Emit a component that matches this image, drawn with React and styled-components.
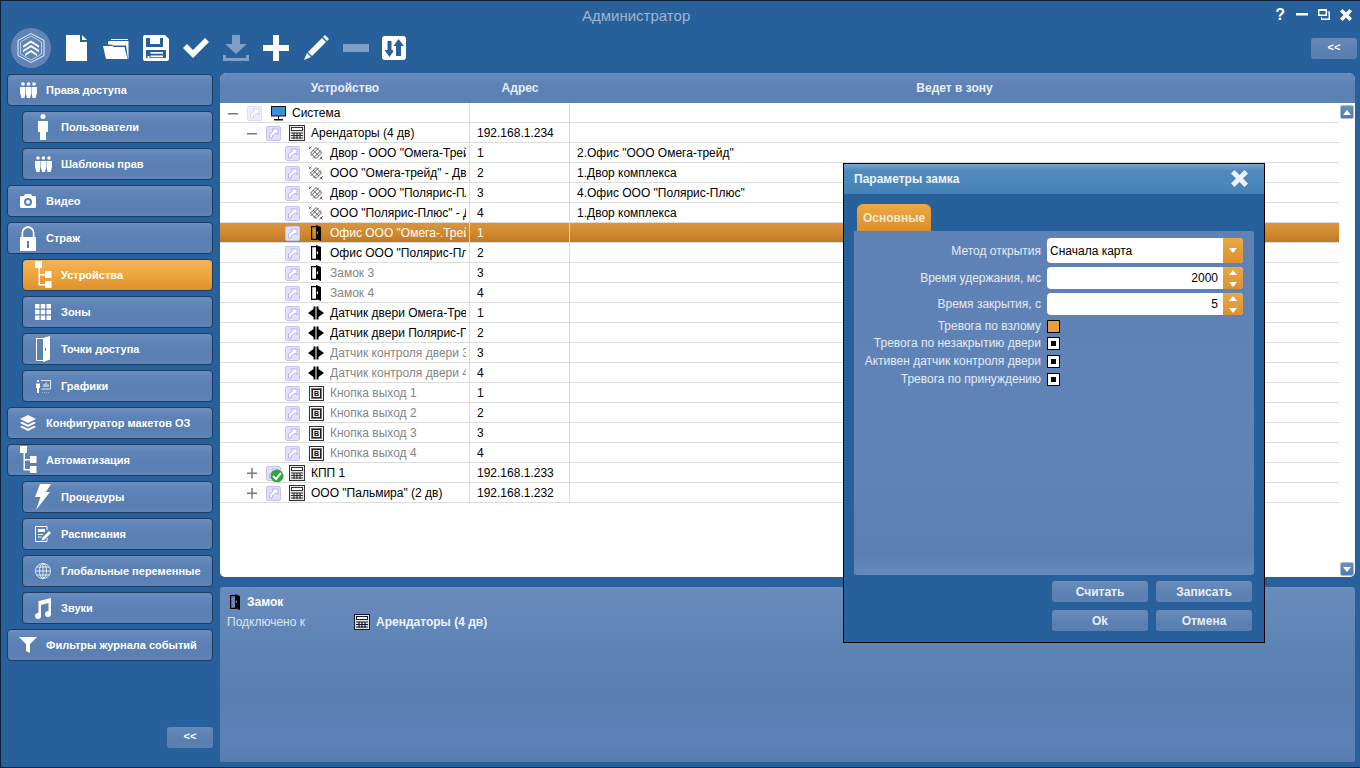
import React from "react";
import styled, { createGlobalStyle } from "styled-components";

const Global = createGlobalStyle`
  html, body { margin: 0; padding: 0; background: #27609a; }
  body { font-family: "Liberation Sans", Arial, sans-serif; }
  * { box-sizing: border-box; }
`;

const blueGrad = "linear-gradient(180deg,#6d8fc0 0%,#5f84b7 22%,#5a7fb2 55%,#5b80b4 85%,#6285b9 100%)";

const Win = styled.div`
  position: relative;
  width: 1360px; height: 768px; overflow: hidden;
  background: #27609a;
  border-top: 1px solid #0d2238; border-left: 1px solid #0d2238; border-bottom: 1px solid #0d2238;
  display: flex; flex-direction: column;
`;
const TitleBar = styled.div`
  height: 27px; flex: none; display: grid; grid-template-columns: 581px auto 1fr; align-items: center;
`;
const Title = styled.div`
  font-size: 15px; color: #9fb6d0; padding-top: 1px;
`;
const WinBtns = styled.div`
  justify-self: end; display: flex; align-items: center; gap: 10px; padding-right: 8px; color: #fff;
`;
const Help = styled.span`
  font: bold 16px "Liberation Sans", sans-serif; color: #fff; margin-right: 1px;
`;
const ToolBar = styled.div`
  height: 40px; margin-bottom: 5px; flex: none; display: flex; align-items: center; padding: 0 3px 0 10px;
`;
const Logo = styled.div`
  width: 40px; height: 40px; border-radius: 50%; background: #5f84b5; display: flex; align-items: center; justify-content: center; margin-right: 12px;
`;
const Tool = styled.div`
  width: 26px; height: 26px; margin: 0 14px 0 ${p => p.$shift || 0}px; display: flex; align-items: center; justify-content: center; color: ${p => (p.$muted ? "#7ea0c8" : "#fff")};
`;
const CollapseBtn = styled.button`
  width: 46px; height: 21px; border: 0; border-radius: 3px; padding: 0 0 3px; background: linear-gradient(180deg,#6888b9,#5a80b2 60%,#5a7fb1);
  color: #fff; font: bold 11px "Liberation Sans", sans-serif;
`;
const ToolSpacer = styled.div`flex: 1;`;
const Body = styled.div`
  flex: 1; min-height: 0; display: flex; padding: 0 5px 5px 0;
`;
const Side = styled.nav`
  width: 219px; flex: none; display: flex; flex-direction: column; gap: 5px; padding: 1px 7px 14px 6px;
`;
const NavItem = styled.div`
  height: 32px; flex: none; margin-left: ${p => (p.$sub ? "15px" : "0")};
  display: flex; align-items: center; padding-left: 5px;
  border: 1px solid #1c3d63; border-radius: 4px;
  background: ${p => (p.$active ? "linear-gradient(180deg,#f3b355 0%,#eda63f 50%,#e0902d 100%)" : blueGrad)};
  color: #fff; font-size: 11px; font-weight: bold;
`;
const NavIcon = styled.span`
  width: 30px; height: 30px; flex: none; display: flex; align-items: center; justify-content: center; margin-right: 3px; color: #fff;
`;
const SideFoot = styled.div`
  margin-top: auto; display: flex; justify-content: flex-end;
`;
const Right = styled.div`
  flex: 1; min-width: 0; display: flex; flex-direction: column; gap: 10px;
`;
const TreePanel = styled.section`
  height: 504px; flex: none; display: flex; flex-direction: column; background: #fff; border-radius: 7px 7px 5px 5px; overflow: hidden; position: relative;
`;
const Head = styled.div`
  height: 30px; flex: none; display: grid; grid-template-columns: 250px 100px 1fr 16px; align-items: center;
  background: linear-gradient(180deg,#6888ba,#5b80b3 60%,#5c81b5);
  color: #e8eef6; font-size: 12px; font-weight: bold; text-align: center;
`;
const HeadCell = styled.div`padding-bottom: 1px;`;
const Rows = styled.div`
  flex: 1; margin-right: 16px;
`;
const Row = styled.div`
  height: 20px; display: grid; grid-template-columns: 250px 100px 1fr; align-items: stretch;
  border-bottom: 1px solid #dcdcdc; font-size: 12px; line-height: 18px;
  background: ${p => (p.$sel ? "linear-gradient(180deg,#d9963f 0%,#d28a30 50%,#bd7a25 100%)" : "#fff")};
  color: ${p => (p.$sel ? "#fff" : "#000")};
`;
const NameCell = styled.div`
  display: flex; align-items: center; overflow: hidden; padding: 1px 0 0 ${p => p.$lvl * 19 + 8}px; border-right: 1px solid #dcdcdc;
  color: ${p => (p.$grey ? "#858585" : "inherit")};
`;
const Cell = styled.div`
  padding: 1px 0 0 7px; overflow: hidden; white-space: nowrap; border-right: ${p => (p.$last ? "0" : "1px solid #dcdcdc")};
`;
const Toggle = styled.span`
  width: 11px; height: 18px; flex: none; display: flex; align-items: center; justify-content: center; margin-right: 8px;
`;
const DevIcon = styled.span`
  width: 16px; height: 16px; flex: none; margin: 0 6px 0 8px; display: flex; align-items: center; justify-content: center;
`;
const Short = styled.span`
  position: relative; width: 15px; height: 15px; flex: none; display: block; opacity: ${p => p.$o || 1};
`;
const Badge = styled.span`
  position: absolute; left: 4px; top: 3px; width: 14px; height: 14px;
`;
const Name = styled.span`
  white-space: nowrap; overflow: hidden; flex: 1; margin-right: 3px;
`;
const Scroll = styled.button`
  position: absolute; right: 1px; width: 14px; height: 14px; padding: 0; border: 1px solid #a8bcd6; border-radius: 2px;
  background: linear-gradient(180deg,#6c8fc0,#4f78b0); display: flex; align-items: center; justify-content: center;
  top: ${p => (p.$down ? "489px" : "32px")};
`;
const Detail = styled.section`
  height: 175px; flex: none; border-radius: 3px 3px 0 0;
  background: linear-gradient(180deg,#698cbc 0%,#5f84b6 30%,#5a7eb0 60%,#5c81b7 90%,#587cb0 100%);
  padding: 7px 7px; color: #fff; font-size: 12px;
`;
const DetailTitle = styled.div`
  display: flex; align-items: center; gap: 6px; font-weight: bold; height: 16px; padding-left: 2px;
`;
const DetailRow = styled.div`
  display: flex; align-items: center; margin-top: 2px; height: 20px;
`;
const DetailLabel = styled.span`width: 127px; color: #dde7f3;`;
const DetailVal = styled.span`font-weight: bold; margin-left: 6px; color: #eef3f9;`;

const Dialog = styled.div`
  position: absolute; left: 842px; top: 162px; width: 422px; height: 480px; background: #27609a; border: 1px solid #000; display: flex; flex-direction: column;
`;
const DlgHead = styled.div`
  height: 30px; flex: none; display: flex; align-items: center; justify-content: space-between; padding: 0 16px 1px 10px;
  background: linear-gradient(180deg,#7ea6cb 0%,#4f8bbd 22%,#4582b6 100%);
  color: #eef3f8; font-size: 12px; font-weight: bold;
`;
const Tabs = styled.div`
  padding: 10px 0 0 13px; height: 37px; flex: none; display: flex;
`;
const Tab = styled.div`
  width: 74px; height: 27px; border-radius: 6px 6px 0 0; background: linear-gradient(180deg,#eda943,#db8e2c);
  color: #f5e8d2; font-size: 12px; font-weight: bold; display: flex; align-items: center; justify-content: center;
`;
const Pane = styled.div`
  margin: 0 10px; height: 344px; flex: none; border-radius: 0 3px 3px 3px; background: linear-gradient(180deg,#5f82b6 0%,#6084b8 70%,#5c7fb3 94%,#6589bb 100%);
  padding-top: 7px; display: flex; flex-direction: column;
`;
const FRow = styled.div`
  display: grid; grid-template-columns: 187px 196px; column-gap: 6px; align-items: center; height: ${p => p.$h}px; margin-bottom: ${p => p.$mb ?? 4}px;
`;
const FLabel = styled.label`
  text-align: right; color: #e3ebf4; font-size: 12px; white-space: nowrap;
`;
const Field = styled.div`
  height: 100%; display: flex; background: #fff; border-radius: 4px; overflow: hidden; color: #000; font-size: 12px;
`;
const FieldText = styled.div`
  flex: 1; display: flex; align-items: center; padding: 0 ${p => (p.$right ? "5px" : "3px")}; justify-content: ${p => (p.$right ? "flex-end" : "flex-start")};
`;
const SelBtn = styled.div`
  width: 20px; flex: none; background: linear-gradient(180deg,#eba843,#dd9030); display: flex; align-items: center; justify-content: center;
`;
const SpinBtns = styled.div`
  width: 20px; flex: none; display: flex; flex-direction: column; background: linear-gradient(180deg,#eba843,#dd9030); padding: 3px 0 2px; justify-content: space-between; align-items: center;
`;
const Check = styled.span`
  width: 13px; height: 13px; display: flex; align-items: center; justify-content: center; border: 1px solid #000; background: ${p => (p.$on ? "#e99f3c" : "#fff")};
`;
const Dot = styled.span`width: 5px; height: 5px; background: #000;`;
const DlgFoot = styled.div`
  flex: 1; display: grid; grid-template-columns: 96px 96px; grid-auto-rows: 21px; justify-content: end; column-gap: 8px; row-gap: 8px; padding: 6px 12px 0 0;
`;
const DlgBtn = styled.button`
  border: 0; border-radius: 3px; padding: 0; background: linear-gradient(180deg,#6b8dbd,#5b80b3 60%,#5a7fb2); color: #e9eff6; font: bold 12px "Liberation Sans", sans-serif;
`;

/* --- drawings --- */
const S = ({ w = 16, h = 16, vb, children, ...r }) => (
  <svg width={w} height={h} viewBox={vb || `0 0 ${w} ${h}`} fill="currentColor" {...r}>{children}</svg>
);
const LogoIcon = () => (
  <svg width="30" height="32" viewBox="0 0 30 32" fill="none" stroke="#fff" strokeWidth="1">
    <path d="M15 1.500 28 8.500V23.500L15 30.500 2 23.500V8.500Z" opacity=".9" />
    <path d="M15 4 25.500 10V22L15 28 4.500 22V10Z" opacity=".6" />
    <path d="M7 13.500 15 8.500l8 5v2.200L15 10.800 7 15.700Z" fill="#fff" stroke="none" />
    <path d="M7 18 15 13l8 5v2.200L15 15.300 7 20.200Z" fill="#fff" stroke="none" />
    <path d="M9 22 15 18l6 4v2L15 20.300 9 24Z" fill="#fff" stroke="none" />
  </svg>
);
const Doc = () => <S w={21} h={26}><path d="M0 0H14V7H21V26H0ZM16 0 21 5H16Z" /></S>;
const Folder = () => <S w={26} h={21}><path d="M8 1H25V2H8ZM5 3.500 7 3H25.500V20L25 21 23 7.500H10L8 6.500H5ZM0 8H9.500L10.500 9H21.500L24.500 21H3Z" /></S>;
const Save = () => <S w={26} h={26}><path fillRule="evenodd" d="M2 0H22L26 4V24A2 2 0 0 1 24 26H2A2 2 0 0 1 0 24V2A2 2 0 0 1 2 0ZM3 3V12H20V3H17V9H7V3ZM3 15V23H4.500V21H6.500V23H23V15ZM7.500 17H20V18.800H7.500ZM7.500 20.500H20V22.300H7.500Z" /></S>;
const CheckI = () => <S w={26} h={20}><path d="M0 10 4 6 10 12 22 0 26 4 10 20Z" /></S>;
const Down = () => <S w={26} h={26}><path d="M9 0H17V9H24L13 19 2 9H9ZM0 20H3V23H23V20H26V26H0Z" /></S>;
const Plus = () => <S w={26} h={26}><path d="M10 0H16V10H26V16H16V26H10V16H0V10H10Z" /></S>;
const Pen = () => <S w={26} h={26}><path d="M22 0 26 4 24 6 20 2ZM19 3 23 7 9 21 5 17ZM4 18 8 22 1 25Z" /></S>;
const Minus = () => <S w={26} h={8}><path d="M0 0H26V8H0Z" /></S>;
const Swap = () => <S w={24} h={24}><path fillRule="evenodd" d="M3 0H21A3 3 0 0 1 24 3V21A3 3 0 0 1 21 24H3A3 3 0 0 1 0 21V3A3 3 0 0 1 3 0ZM5.500 5V14H2.500L7.500 21 11 16V14H9.500V5ZM16.500 3 11.500 10H14V20H19V10H22Z" /></S>;
const Users = () => <S w={17} h={16}><circle cx="3" cy="2" r="1.800" /><circle cx="8.500" cy="2" r="1.800" /><circle cx="14" cy="2" r="1.800" /><path d="M0 5H5.500V11L4.500 16H1.500L0 11ZM6 5H11V12L10 16H7L6 12ZM11.500 5H17V11L15.500 16H12.500L11.500 11Z" /></S>;
const Person = () => <S w={10} h={26}><circle cx="5" cy="2.500" r="2.500" /><path d="M0 7H10V18H8V26H2V18H0Z" /></S>;
const Camera = () => <S w={16} h={14}><path fillRule="evenodd" d="M5 0H11L12 2H14.500A1.500 1.500 0 0 1 16 3.500V12.500A1.500 1.500 0 0 1 14.500 14H1.500A1.500 1.500 0 0 1 0 12.500V3.500A1.500 1.500 0 0 1 1.500 2H4ZM8 4A4 4 0 1 0 8 12 4 4 0 0 0 8 4ZM8 6A2 2 0 1 1 8 10 2 2 0 0 1 8 6Z" /></S>;
const Lock = () => <S w={16} h={25}><path fillRule="evenodd" d="M8 0A7 7 0 0 1 14.500 7V11H16V25H0V11H1.500V7A7 7 0 0 1 8 0ZM8 2A5 5 0 0 0 3.200 7V11H12.800V7A5 5 0 0 0 8 2ZM7 15V22H9V15Z" /></S>;
const Tree = () => <S w={17} h={28}><path d="M0 0H7V7H5V13H10V10H16.500V17H10V14.500H5V23H10V20H16.500V27H10V24.500H3.500V7H0Z" /></S>;
const Grid = () => <S w={16} h={16}><path d="M0 0h4.500v4.500H0zM5.700 0h4.500v4.500H5.700zM11.500 0H16v4.500h-4.500zM0 5.700h4.500v4.500H0zM5.700 5.700h4.500v4.500H5.700zM11.500 5.700H16v4.500h-4.500zM0 11.500h4.500V16H0zM5.700 11.500h4.500V16H5.700zM11.500 11.500H16V16h-4.500z" /></S>;
const Door = () => <S w={14} h={26}><path d="M0 2H8V3H1V24H8V25H0Z" /><path fillRule="evenodd" d="M7 2 14 0V23.500L7 26ZM9 12V15H10V12Z" /></S>;
const Charts = () => <S w={15} h={14} fill="none" stroke="currentColor"><path d="M5 1.500H15M14.500 1.500V10H5.500" strokeWidth=".8" /><path d="M8 8V5M10 8V3.500M12 8V5.500" strokeWidth="1" /><circle cx="2" cy="2" r="1" fill="currentColor" stroke="none" /><path d="M0 4.500H4V9H3V14H1V9H0Z" fill="currentColor" stroke="none" /><path d="M6 14H14" strokeWidth=".8" strokeDasharray="1 1" /></S>;
const Layers = () => <S w={16} h={16}><path d="M8 0 16 4 8 8 0 4ZM2 6.800 8 9.800 14 6.800 16 8 8 12 0 8ZM2 10.800 8 13.800 14 10.800 16 12 8 16 0 12Z" /></S>;
const Bolt = () => <S w={16} h={26}><path d="M5 0H16L11 8H15L1 26 5.500 13H0Z" /></S>;
const Sched = () => <S w={16} h={16}><path fill="none" stroke="currentColor" strokeWidth="1" d="M.5.5H12V4M12 12V15.500H.500V.500" /><path d="M3 3H10V6H3ZM3 8H8V9H3ZM3 10.500H6.500V11.500H3ZM14 5 16 7 9 14 6.500 14.500 7 12Z" /></S>;
const Globe = () => <S w={16} h={16} fill="none" stroke="currentColor"><g strokeWidth=".8"><circle cx="8" cy="8" r="7.500" /><ellipse cx="8" cy="8" rx="3.500" ry="7.500" /><path d="M8 .5V15.500M.5 8H15.500M1.700 4H14.300M1.700 12H14.300" /></g></S>;
const Music = () => <S w={16} h={21}><path d="M4 3 16 0V16A3 3 0 1 1 13.500 13V5L6 7V18A3 3 0 1 1 3.500 15V3Z" /></S>;
const Filter = () => <S w={18} h={16}><path d="M0 0H18L11 7V16L7 14V7Z" /></S>;
const WinMin = () => <S w={12} h={3}><path d="M0 0H12V2.500H0Z" /></S>;
const WinMax = () => <S w={12} h={11}><path fillRule="evenodd" d="M0 0H9V7H0ZM1.500 2V5.500H7.500V2Z" /><path d="M9.500 2.500H12V11H3V8H4V9.500H10.500V3.500H9.500Z" /></S>;
const Close = ({ s = 12 }) => <svg width={s} height={s} viewBox="0 0 12 12" fill="currentColor"><path d="M2.500 0 6 3.500 9.500 0 12 2.500 8.500 6 12 9.500 9.500 12 6 8.500 2.500 12 0 9.500 3.500 6 0 2.500Z" /></svg>;

const ShortIcon = () => (
  <svg width="15" height="15" viewBox="0 0 15 15">
    <rect x=".5" y=".5" width="14" height="14" rx="1.500" fill="#e0e0fa" stroke="#c4c4ee" />
    <path d="M3.500 12 3.500 8 7.500 5 6 3H12V8.500L10 7 6.500 9.500 6 12Z" fill="#fdfdff" stroke="#9c9ce4" strokeWidth=".7" />
  </svg>
);
const Monitor = () => <svg width="15" height="15" viewBox="0 0 15 15"><rect x=".5" y=".5" width="14" height="9.500" fill="#3a8fdc" stroke="#111" /><path d="M7 10H8V13H7ZM3 13H12V14.500H3Z" fill="#111" /></svg>;
const Panel = ({ c = "#333" }) => (
  <svg width="16" height="16" viewBox="0 0 16 16" fill="none"><rect x=".5" y=".5" width="15" height="15" fill="#e6e6e6" stroke={c} /><rect x="2.500" y="2.500" width="11" height="3" fill="#fff" stroke={c} /><path d="M2 8H14M2 10.500H14M2 13H14M5 7.500V14M8 7.500V14M11 7.500V14" stroke={c} strokeWidth="1.200" /></svg>
);
const Hatch = () => (
  <svg width="16" height="16" viewBox="0 0 16 16" fill="none" stroke="#5c5c5c" strokeWidth="1">
    <path d="M2.500 8 8 2.500 13.500 8 8 13.500Z" />
    <path d="M5.200 5.300 10.700 10.800M2.800 10.800 10.800 2.800M5.300 13.200 13.200 5.300" />
    <path d="M1 1.500 3 3.500M1 4 3.500 1.500M12.500 12.500 14.500 14.500M11.500 14.500 14.500 11.500" />
  </svg>
);
const LockDoor = () => <svg width="12" height="16" viewBox="0 0 12 16" fill="#000"><path d="M1 1H7V2.200H2.200V13.800H7V15H1Z" /><path fillRule="evenodd" d="M6 0 11 2V16L6 14ZM6.800 6.500V9H8V6.500Z" /></svg>;
const Sensor = () => <svg width="16" height="14" viewBox="0 0 16 14" fill="#000"><path d="M0 7 5.500 3V11ZM16 7 10.500 3V11ZM5.500 .500H7.500V13.500H5.500ZM8.500 .500H10.500V13.500H8.500Z" /></svg>;
const BtnIcon = () => <svg width="15" height="15" viewBox="0 0 15 15" fill="none"><rect x=".5" y=".5" width="14" height="14" stroke="#333" /><rect x="2" y="2" width="11" height="11" fill="#777" /><rect x="3.500" y="3.500" width="8" height="8" fill="#eee" stroke="#222" /><text x="7.500" y="10" textAnchor="middle" fontFamily="Liberation Sans" fontSize="7" fontWeight="bold" fill="#000">B</text></svg>;
const Arrow = ({ up, c = "#fff", w = 8 }) => (
  <svg width={w} height={w / 2 + 1} viewBox="0 0 8 5"><path d={up ? "M0 5 4 0 8 5Z" : "M0 0H8L4 5Z"} fill={c} /></svg>
);
const CheckBadge = () => <svg width="14" height="14" viewBox="0 0 14 14"><circle cx="7" cy="7" r="6.500" fill="#2fa53a" /><path d="M3 7 6 10 11 4" stroke="#fff" strokeWidth="2" fill="none" /></svg>;
const ToggleGlyph = ({ open }) => (
  <svg width="11" height="11" viewBox="0 0 11 11"><path d={open ? "M0 5H10V6.500H0Z" : "M0 4.500H10V6H0ZM4.300 0H5.800V10.500H4.300Z"} fill="#777" /></svg>
);

const navItems = [
  ["Права доступа", <Users />, 0],
  ["Пользователи", <Person />, 1],
  ["Шаблоны прав", <Users />, 1],
  ["Видео", <Camera />, 0],
  ["Страж", <Lock />, 0],
  ["Устройства", <Tree />, 1, true],
  ["Зоны", <Grid />, 1],
  ["Точки доступа", <Door />, 1],
  ["Графики", <Charts />, 1],
  ["Конфигуратор макетов ОЗ", <Layers />, 0],
  ["Автоматизация", <Tree />, 0],
  ["Процедуры", <Bolt />, 1],
  ["Расписания", <Sched />, 1],
  ["Глобальные переменные", <Globe />, 1],
  ["Звуки", <Music />, 1],
  ["Фильтры журнала событий", <Filter />, 0],
];

const tools = [
  [<Doc />], [<Folder />], [<Save />], [<CheckI />], [<Down />, true], [<Plus />], [<Pen />], [<Minus />, true], [<Swap />, false, -2],
];

const rows = [
  { l: 0, t: "open", ic: <Monitor />, n: "Система", a: "", z: "", o: 0.55 },
  { l: 1, t: "open", ic: <Panel />, n: "Арендаторы (4 дв)", a: "192.168.1.234", z: "" },
  { l: 2, ic: <Hatch />, n: 'Двор - ООО "Омега-Трейд"', a: "1", z: '2.Офис "ООО Омега-трейд"' },
  { l: 2, ic: <Hatch />, n: 'ООО "Омега-трейд" - Двор', a: "2", z: "1.Двор комплекса" },
  { l: 2, ic: <Hatch />, n: 'Двор - ООО "Полярис-Плюс"', a: "3", z: '4.Офис ООО "Полярис-Плюс"' },
  { l: 2, ic: <Hatch />, n: 'ООО "Полярис-Плюс" - Двор', a: "4", z: "1.Двор комплекса" },
  { l: 2, ic: <LockDoor />, n: 'Офис ООО "Омега-.Трейд"', a: "1", z: "", sel: true },
  { l: 2, ic: <LockDoor />, n: 'Офис ООО "Полярис-Плюс"', a: "2", z: "" },
  { l: 2, ic: <LockDoor />, n: "Замок 3", a: "3", z: "", g: true },
  { l: 2, ic: <LockDoor />, n: "Замок 4", a: "4", z: "", g: true },
  { l: 2, ic: <Sensor />, n: "Датчик двери Омега-Трейд", a: "1", z: "" },
  { l: 2, ic: <Sensor />, n: "Датчик двери Полярис-Плюс", a: "2", z: "" },
  { l: 2, ic: <Sensor />, n: "Датчик контроля двери 3", a: "3", z: "", g: true },
  { l: 2, ic: <Sensor />, n: "Датчик контроля двери 4", a: "4", z: "", g: true },
  { l: 2, ic: <BtnIcon />, n: "Кнопка выход 1", a: "1", z: "", g: true },
  { l: 2, ic: <BtnIcon />, n: "Кнопка выход 2", a: "2", z: "", g: true },
  { l: 2, ic: <BtnIcon />, n: "Кнопка выход 3", a: "3", z: "", g: true },
  { l: 2, ic: <BtnIcon />, n: "Кнопка выход 4", a: "4", z: "", g: true },
  { l: 1, t: "closed", ic: <Panel />, n: "КПП 1", a: "192.168.1.233", z: "", ok: true },
  { l: 1, t: "closed", ic: <Panel />, n: 'ООО "Пальмира" (2 дв)', a: "192.168.1.232", z: "" },
];

const Spin = ({ v }) => (
  <Field>
    <FieldText $right>{v}</FieldText>
    <SpinBtns><Arrow up w={8} /><Arrow w={8} /></SpinBtns>
  </Field>
);

export default function App() {
  return (
    <Win>
      <Global />
      <TitleBar>
        <span />
        <Title>Администратор</Title>
        <WinBtns><Help>?</Help><WinMin /><WinMax /><Close /></WinBtns>
      </TitleBar>
      <ToolBar>
        <Logo><LogoIcon /></Logo>
        {tools.map(([ic, m, sh], i) => <Tool key={i} $muted={m} $shift={sh}>{ic}</Tool>)}
        <ToolSpacer />
        <CollapseBtn>&lt;&lt;</CollapseBtn>
      </ToolBar>
      <Body>
        <Side>
          {navItems.map(([t, ic, sub, act]) => (
            <NavItem key={t} $sub={sub} $active={act}><NavIcon>{ic}</NavIcon>{t}</NavItem>
          ))}
          <SideFoot><CollapseBtn>&lt;&lt;</CollapseBtn></SideFoot>
        </Side>
        <Right>
          <TreePanel>
            <Head>
              <HeadCell>Устройство</HeadCell><HeadCell>Адрес</HeadCell><HeadCell>Ведет в зону</HeadCell><span />
            </Head>
            <Rows>
              {rows.map((r, i) => (
                <Row key={i} $sel={r.sel}>
                  <NameCell $lvl={r.l} $grey={r.g}>
                    {r.t ? <Toggle><ToggleGlyph open={r.t === "open"} /></Toggle> : <Toggle />}
                    <Short $o={r.o}>
                      <ShortIcon />
                      {r.ok && <Badge><CheckBadge /></Badge>}
                    </Short>
                    <DevIcon>{r.ic}</DevIcon>
                    <Name>{r.n}</Name>
                  </NameCell>
                  <Cell>{r.a}</Cell>
                  <Cell $last>{r.z}</Cell>
                </Row>
              ))}
            </Rows>
            <Scroll><Arrow up w={8} /></Scroll>
            <Scroll $down><Arrow w={8} /></Scroll>
          </TreePanel>
          <Detail>
            <DetailTitle><LockDoor />Замок</DetailTitle>
            <DetailRow>
              <DetailLabel>Подключено к</DetailLabel>
              <Panel c="#0d1a2b" />
              <DetailVal>Арендаторы (4 дв)</DetailVal>
            </DetailRow>
          </Detail>
        </Right>
      </Body>
      <Dialog>
        <DlgHead>Параметры замка<Close s={17} /></DlgHead>
        <Tabs><Tab>Основные</Tab></Tabs>
        <Pane>
          <FRow $h={25}>
            <FLabel>Метод открытия</FLabel>
            <Field><FieldText>Сначала карта</FieldText><SelBtn><Arrow w={8} /></SelBtn></Field>
          </FRow>
          <FRow $h={22}><FLabel>Время удержания, мс</FLabel><Spin v="2000" /></FRow>
          <FRow $h={22}><FLabel>Время закрытия, с</FLabel><Spin v="5" /></FRow>
          <FRow $h={14} $mb={3}><FLabel>Тревога по взлому</FLabel><Check $on /></FRow>
          <FRow $h={14} $mb={4}><FLabel>Тревога по незакрытию двери</FLabel><Check><Dot /></Check></FRow>
          <FRow $h={14} $mb={4}><FLabel>Активен датчик контроля двери</FLabel><Check><Dot /></Check></FRow>
          <FRow $h={14} $mb={4}><FLabel>Тревога по принуждению</FLabel><Check><Dot /></Check></FRow>
        </Pane>
        <DlgFoot>
          <DlgBtn>Считать</DlgBtn><DlgBtn>Записать</DlgBtn><DlgBtn>Ok</DlgBtn><DlgBtn>Отмена</DlgBtn>
        </DlgFoot>
      </Dialog>
    </Win>
  );
}
